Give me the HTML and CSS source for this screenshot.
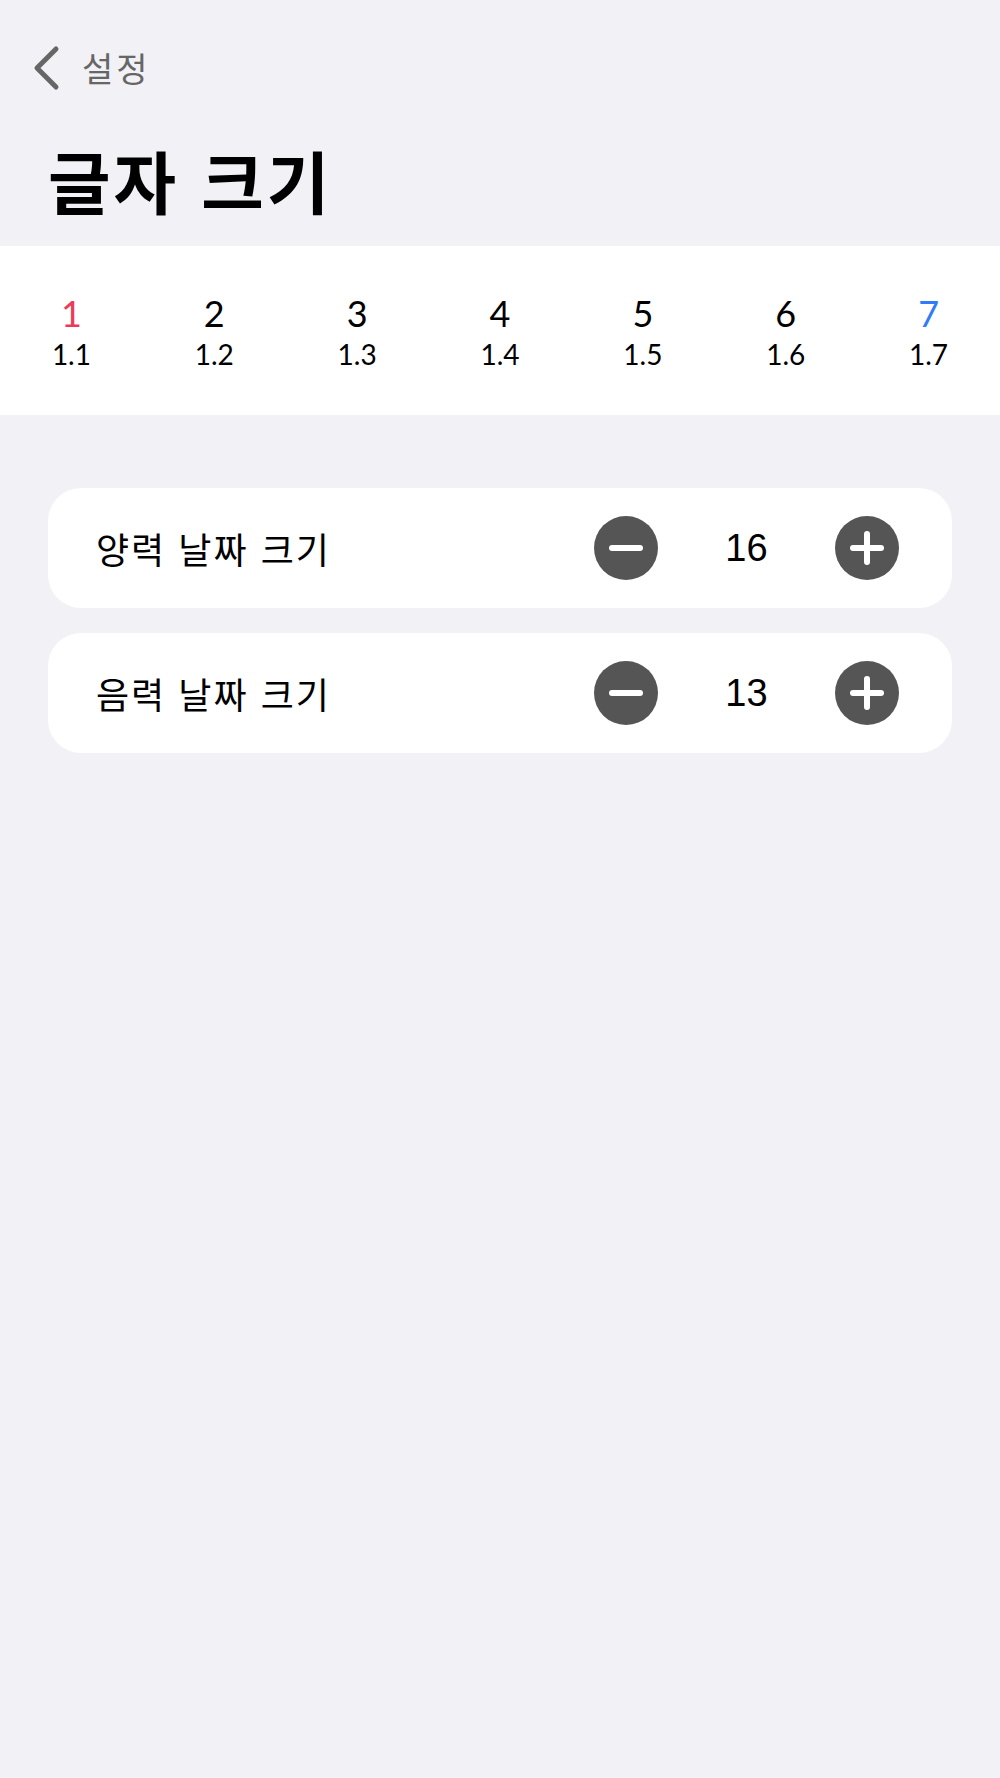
FILE: index.html
```html
<!DOCTYPE html>
<html lang="ko">
<head>
    <meta charset="UTF-8">
    <meta name="viewport" content="width=device-width, initial-scale=1.0">
    <title>글자 크기</title>
    <link rel="stylesheet" href="styles.css">
</head>
<body>
    <div class="nav">
        <svg class="back-icon" width="28" height="46" viewBox="0 0 28 46">
            <polyline points="24,4 5,23 24,42" fill="none" stroke="#666666" stroke-width="5" stroke-linecap="round" stroke-linejoin="round"/>
        </svg>
        <span class="back-label">설정</span>
    </div>

    <h1 class="title">글자 크기</h1>

    <div class="scale">
        <div class="scale-item">
            <span class="level red">1</span>
            <span class="ratio">1.1</span>
        </div>
        <div class="scale-item">
            <span class="level">2</span>
            <span class="ratio">1.2</span>
        </div>
        <div class="scale-item">
            <span class="level">3</span>
            <span class="ratio">1.3</span>
        </div>
        <div class="scale-item">
            <span class="level">4</span>
            <span class="ratio">1.4</span>
        </div>
        <div class="scale-item">
            <span class="level">5</span>
            <span class="ratio">1.5</span>
        </div>
        <div class="scale-item">
            <span class="level">6</span>
            <span class="ratio">1.6</span>
        </div>
        <div class="scale-item">
            <span class="level blue">7</span>
            <span class="ratio">1.7</span>
        </div>
    </div>

    <div class="settings">
        <div class="card">
            <span class="card-label">양력 날짜 크기</span>
            <div class="stepper">
                <button class="step-button" type="button">
                    <svg width="64" height="64" viewBox="0 0 64 64">
                        <line x1="18" y1="32" x2="46" y2="32" stroke="#ffffff" stroke-width="6" stroke-linecap="round"/>
                    </svg>
                </button>
                <span class="step-value">16</span>
                <button class="step-button" type="button">
                    <svg width="64" height="64" viewBox="0 0 64 64">
                        <line x1="18" y1="32" x2="46" y2="32" stroke="#ffffff" stroke-width="6" stroke-linecap="round"/>
                        <line x1="32" y1="18" x2="32" y2="46" stroke="#ffffff" stroke-width="6" stroke-linecap="round"/>
                    </svg>
                </button>
            </div>
        </div>
        <div class="card">
            <span class="card-label">음력 날짜 크기</span>
            <div class="stepper">
                <button class="step-button" type="button">
                    <svg width="64" height="64" viewBox="0 0 64 64">
                        <line x1="18" y1="32" x2="46" y2="32" stroke="#ffffff" stroke-width="6" stroke-linecap="round"/>
                    </svg>
                </button>
                <span class="step-value">13</span>
                <button class="step-button" type="button">
                    <svg width="64" height="64" viewBox="0 0 64 64">
                        <line x1="18" y1="32" x2="46" y2="32" stroke="#ffffff" stroke-width="6" stroke-linecap="round"/>
                        <line x1="32" y1="18" x2="32" y2="46" stroke="#ffffff" stroke-width="6" stroke-linecap="round"/>
                    </svg>
                </button>
            </div>
        </div>
    </div>
</body>
</html>
```

FILE: styles.css
```css
body {
    font-family: "Noto Sans CJK KR", "Noto Sans", sans-serif;
    background-color: #f2f1f6;
    color: #000000;
    margin: 0;
    padding: 0;
}

.nav {
    display: flex;
    align-items: center;
    gap: 22px;
    height: 56px;
    padding: 40px 0 0 32px;
}

.back-icon {
    display: block;
}

.back-label {
    font-size: 34px;
    line-height: 40px;
    letter-spacing: 3px;
    color: #666666;
}

.title {
    margin: 44px 0 26px 48px;
    font-size: 68px;
    line-height: 80px;
    letter-spacing: 3px;
    font-weight: 700;
}

.scale {
    display: grid;
    grid-template-columns: repeat(7, 1fr);
    height: 169px;
    box-sizing: border-box;
    padding-top: 47px;
    background-color: #ffffff;
}

.scale-item {
    display: flex;
    flex-direction: column;
    align-items: center;
    gap: 4px;
    font-family: Lato, "Open Sans", sans-serif;
}

.level {
    font-size: 36px;
    line-height: 40px;
}

.ratio {
    font-size: 28px;
    line-height: 34px;
}

.red {
    color: #ec3a5c;
}

.blue {
    color: #2f7cf6;
}

.settings {
    display: flex;
    flex-direction: column;
    gap: 25px;
    margin: 73px 48px 0;
}

.card {
    display: flex;
    align-items: center;
    justify-content: space-between;
    height: 120px;
    padding: 0 53px 0 48px;
    background-color: #ffffff;
    border-radius: 33px;
}

.card-label {
    font-size: 36px;
    line-height: 44px;
    letter-spacing: 2px;
}

.stepper {
    display: flex;
    align-items: center;
}

.step-button {
    width: 64px;
    height: 64px;
    padding: 0;
    border: none;
    border-radius: 50%;
    background-color: #555555;
    cursor: pointer;
}

.step-button svg {
    display: block;
}

.step-value {
    width: 177px;
    text-align: center;
    font-family: "Liberation Sans", Arial, sans-serif;
    font-size: 38px;
    line-height: 44px;
}
```
